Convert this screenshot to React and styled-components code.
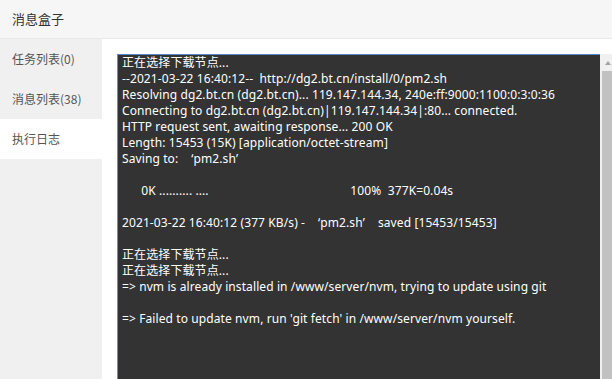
import React from "react"
import styled, { createGlobalStyle } from "styled-components"

const logLines = [
    "正在选择下载节点...",
    "--2021-03-22 16:40:12--  http://dg2.bt.cn/install/0/pm2.sh",
    "Resolving dg2.bt.cn (dg2.bt.cn)... 119.147.144.34, 240e:ff:9000:1100:0:3:0:36",
    "Connecting to dg2.bt.cn (dg2.bt.cn)|119.147.144.34|:80... connected.",
    "HTTP request sent, awaiting response... 200 OK",
    "Length: 15453 (15K) [application/octet-stream]",
    "Saving to: ‘pm2.sh’",
    "",
    "      0K .......... ....                                            100%  377K=0.04s",
    "",
    "2021-03-22 16:40:12 (377 KB/s) - ‘pm2.sh’ saved [15453/15453]",
    "",
    "正在选择下载节点...",
    "正在选择下载节点...",
    "=> nvm is already installed in /www/server/nvm, trying to update using git",
    "",
    "=> Failed to update nvm, run 'git fetch' in /www/server/nvm yourself.",
]

const tabs = ["任务列表(0)", "消息列表(38)", "执行日志"]

function renderLine(line) {
    return line.split(/([‘’])/).map((part, i) => {
        if (part === "‘") return <Quote key={i} $open>‘</Quote>
        if (part === "’") return <Quote key={i}>’</Quote>
        return part
    })
}

function App() {
    return (
        <>
            <GlobalStyle />
            <Page>
                <Header>消息盒子</Header>
                <Body>
                    <Sidebar>
                        {tabs.map((t, i) => (
                            <NavItem key={t} $active={i === 2}>{t}</NavItem>
                        ))}
                    </Sidebar>
                    <Main>
                        <LogBox>
                            <LogText>
                                {logLines.map((line, i) => (
                                    <LogLine key={i}>{line ? renderLine(line) : " "}</LogLine>
                                ))}
                            </LogText>
                            <Scrollbar>
                                <ArrowUp />
                                <Thumb />
                            </Scrollbar>
                        </LogBox>
                    </Main>
                </Body>
            </Page>
        </>
    )
}

export default App;

const GlobalStyle = createGlobalStyle`
    body {
        margin: 0;
        overflow: hidden;
        font-family: "Noto Sans", "Noto Sans CJK SC", sans-serif;
    }
`

const Page = styled.div`
    width: 612px;
    height: 379px;
    display: flex;
    flex-direction: column;
    overflow: hidden;
`

const Header = styled.div`
    height: 38px;
    line-height: 38px;
    padding-left: 12px;
    background: #f6f6f6;
    border-bottom: 1px solid #e8e8e8;
    font-size: 13px;
    color: #333;
    font-family: "Noto Sans CJK SC", sans-serif;
`

const Body = styled.div`
    flex: 1;
    display: flex;
    min-height: 0;
`

const Sidebar = styled.div`
    width: 102px;
    background: #f0f0f0;
    flex-shrink: 0;
`

const NavItem = styled.div`
    height: 40px;
    line-height: 40px;
    padding-left: 12px;
    font-size: 12px;
    color: #555;
    font-family: "Noto Sans CJK SC", sans-serif;
    background: ${p => p.$active ? "#fff" : "transparent"};
`

const Main = styled.div`
    flex: 1;
    background: #fff;
    padding: 15px 0 0 15px;
    overflow: hidden;
`

const LogBox = styled.div`
    width: 500px;
    height: 360px;
    display: flex;
`

const LogText = styled.div`
    flex: 1;
    background: #333;
    border-top: 1px solid #5b84c4;
    border-left: 1px solid #6d8fc4;
    padding: 0 4px;
    color: #fff;
    font-size: 12px;
    line-height: 16px;
    letter-spacing: 0.1px;
    overflow: hidden;
    font-family: "Noto Sans", "Noto Sans CJK SC", sans-serif;
`

const LogLine = styled.div`
    height: 16px;
    white-space: pre;
`

const Quote = styled.span`
    display: inline-block;
    width: 12px;
    text-align: ${p => p.$open ? "right" : "left"};
`

const Scrollbar = styled.div`
    width: 17px;
    flex-shrink: 0;
    background: #f0f0f0;
    display: flex;
    flex-direction: column;
    align-items: center;
`

const ArrowUp = styled.div`
    height: 17px;
    width: 17px;
    position: relative;
    &::after {
        content: "";
        position: absolute;
        left: 5px;
        top: 7px;
        border-left: 3.5px solid transparent;
        border-right: 3.5px solid transparent;
        border-bottom: 4px solid #a3a3a3;
    }
`

const Thumb = styled.div`
    width: 13px;
    flex: 1;
    background: #c1c1c1;
`
